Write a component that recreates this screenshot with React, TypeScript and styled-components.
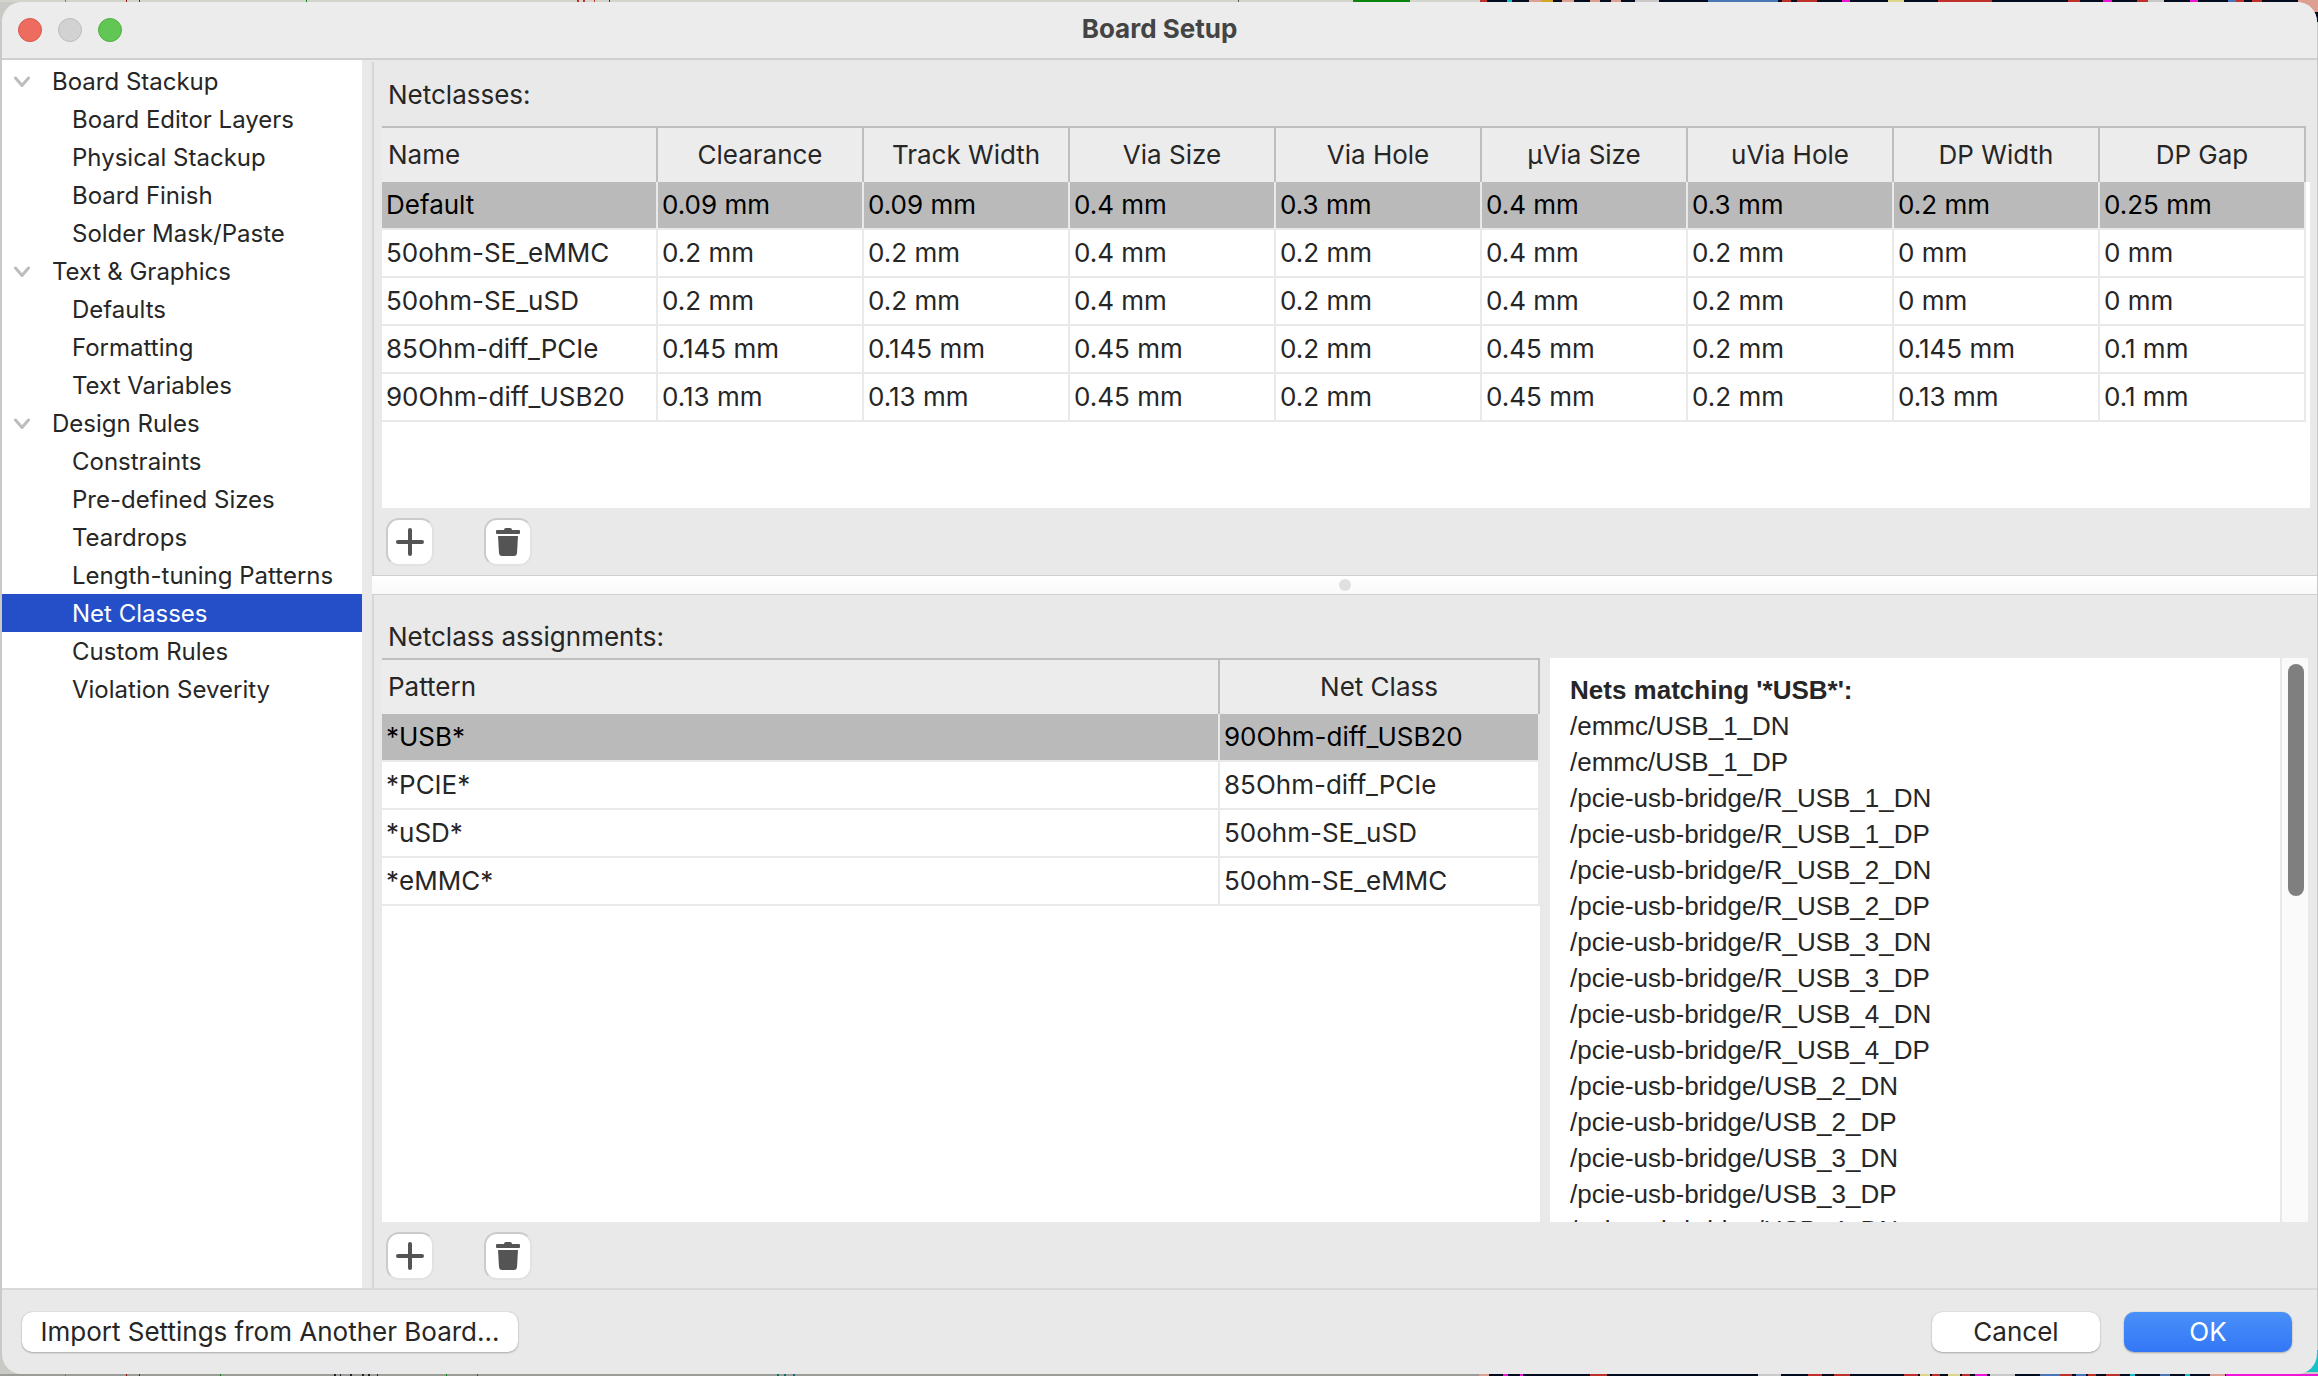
import React, { useState } from "react";
import styled, { createGlobalStyle } from "styled-components";

const Global = createGlobalStyle`
  *, *::before, *::after { box-sizing: border-box; }
  html, body { margin: 0; height: 100%; }
  #root { height: 100%; }
  body {
    font-family: Inter, "Liberation Sans", sans-serif;
    color: #262626;
    overflow: hidden;
  }
  button { font: inherit; color: inherit; }
`;

const Desktop = styled.div`
  position: relative;
  height: 100vh;
  padding: 2px 1px 2px 2px;
  background: #c9c9c5;
`;

const Backdrop = styled.svg`
  position: absolute;
  inset: 0;
  width: 100%;
  height: 100%;
`;

const Window = styled.main`
  position: relative;
  display: flex;
  flex-direction: column;
  height: 100%;
  overflow: hidden;
  border-radius: 20px;
  background: #e9e9e9;
`;

const TitleBar = styled.header`
  display: grid;
  grid-template-columns: 1fr auto 1fr;
  align-items: center;
  flex: none;
  height: 58px;
  padding: 0 16px;
  background: #ececec;
  border-bottom: 2px solid #cfcfcf;
`;

const Lights = styled.div`
  display: flex;
  gap: 16px;
`;

const Light = styled.button<{ $fill: string; $edge: string }>`
  width: 24px;
  height: 24px;
  padding: 0;
  border: 1px solid ${(p) => p.$edge};
  border-radius: 50%;
  background: ${(p) => p.$fill};
`;

const Title = styled.h1`
  margin: 0;
  padding-bottom: 2px;
  font-size: 26px;
  line-height: 32px;
  font-weight: 700;
  color: #444;
`;

const Body = styled.div`
  display: flex;
  flex: 1;
  min-height: 0;
`;

const Sidebar = styled.nav`
  flex: none;
  width: 360px;
  padding-top: 2px;
  background: #fff;
`;

const Tree = styled.ul`
  margin: 0;
  padding: 0;
  list-style: none;
`;

const TreeRow = styled.button<{ $child?: boolean; $selected?: boolean }>`
  display: flex;
  align-items: center;
  width: 100%;
  height: 38px;
  padding: 2px 0 0 ${(p) => (p.$child ? 70 : 12)}px;
  border: 0;
  background: ${(p) => (p.$selected ? "#244fc9" : "transparent")};
  color: ${(p) => (p.$selected ? "#fff" : "#262626")};
  font-size: 24px;
  line-height: 36px;
  white-space: nowrap;
`;

const Chevron = styled.svg`
  width: 16px;
  height: 12px;
  margin-right: 22px;
`;

const Content = styled.div`
  display: flex;
  flex: 1;
  flex-direction: column;
  min-width: 0;
  padding: 2px 0 0 10px;
`;

const Panel = styled.section<{ $grow?: boolean }>`
  display: flex;
  flex-direction: column;
  flex: ${(p) => (p.$grow ? "1" : "none")};
  min-height: 0;
  padding: ${(p) => (p.$grow ? "24px 8px 8px 8px" : "15px 7px 9px 8px")};
  border-left: 2px solid #d6d6d6;
`;

const PanelLabel = styled.h2<{ $gap: number }>`
  margin: 0;
  padding: 0 0 ${(p) => p.$gap}px 6px;
  font-size: 26px;
  line-height: 36px;
  font-weight: 400;
`;

const Splitter = styled.div`
  display: flex;
  align-items: center;
  justify-content: center;
  flex: none;
  height: 20px;
  border-top: 1px solid #d0d0d0;
  border-bottom: 1px solid #d0d0d0;
  background: linear-gradient(#fff, #f9f9f9);
`;

const Grip = styled.span`
  width: 12px;
  height: 12px;
  border-radius: 50%;
  background: #e0e0e0;
`;

const GridBox = styled.div<{ $inset?: number; $height?: number }>`
  height: ${(p) => (p.$height ? p.$height + "px" : "auto")};
  padding-right: ${(p) => p.$inset ?? 0}px;
  background: linear-gradient(#e9e9e9 56px, #fff 56px);
`;

const Grid = styled.table`
  width: 100%;
  table-layout: fixed;
  border-collapse: separate;
  border-spacing: 0;
  font-size: 26px;
  line-height: 30px;
`;

const HeadCell = styled.th`
  height: 56px;
  padding: 0;
  border-top: 2px solid #bebebe;
  border-right: 2px solid #bebebe;
  background: #ececec;
  font-weight: 400;
  text-align: center;
  &:first-child {
    padding-left: 6px;
    text-align: left;
  }
`;

const Cell = styled.td<{ $selected?: boolean }>`
  height: 48px;
  padding: 0 0 0 4px;
  border-right: 2px solid #e9e9e9;
  border-bottom: 2px solid #e9e9e9;
  background: ${(p) => (p.$selected ? "#bababa" : "#fff")};
  color: ${(p) => (p.$selected ? "#000" : "#262626")};
  white-space: nowrap;
`;

const ToolRow = styled.div`
  display: flex;
  gap: 50px;
  padding: 10px 0 0 4px;
`;

const ToolButton = styled.button`
  display: flex;
  align-items: center;
  justify-content: center;
  width: 48px;
  height: 48px;
  padding: 0;
  border: 2px solid #cbcbcb;
  border-right-color: #e2e2e2;
  border-bottom-color: #e2e2e2;
  border-radius: 13px;
  background: #fff;
`;

const Split = styled.div`
  display: grid;
  grid-template-columns: minmax(0, 1fr) 758px;
  gap: 10px;
  flex: 1;
  min-height: 0;
  padding-right: 1px;
`;

const NetsPane = styled.div`
  display: flex;
  min-height: 0;
  background: #fff;
`;

const Nets = styled.div`
  flex: 1;
  min-width: 0;
  overflow: hidden;
  padding: 14px 0 0 20px;
  font-family: "Liberation Sans", Arial, sans-serif;
  font-size: 26px;
  line-height: 36px;
`;

const NetsTitle = styled.h3`
  margin: 0;
  font-size: 26px;
  line-height: 36px;
`;

const NetList = styled.ul`
  margin: 0;
  padding: 0;
  list-style: none;
`;

const Track = styled.div`
  width: 28px;
  padding: 6px 4px 0 6px;
  border-left: 2px solid #e8e8e8;
  background: #fafafa;
`;

const Thumb = styled.div`
  width: 16px;
  height: 232px;
  border-radius: 8px;
  background: #7f7f7f;
`;

const Footer = styled.footer`
  display: flex;
  align-items: center;
  gap: 24px;
  flex: none;
  height: 86px;
  padding: 0 25px 0 20px;
  border-top: 2px solid #d9d9d9;
`;

const PushButton = styled.button<{ $primary?: boolean; $wide?: boolean }>`
  width: ${(p) => (p.$wide ? 496 : 168)}px;
  height: 40px;
  margin-right: ${(p) => (p.$wide ? "auto" : "0")};
  padding: 0;
  border: 0;
  border-radius: 10px;
  background: ${(p) => (p.$primary ? "linear-gradient(#4a90f8, #3377f6)" : "#fff")};
  box-shadow: 0 0 1px rgba(0, 0, 0, 0.3), 0 1px 2px rgba(0, 0, 0, 0.25);
  color: ${(p) => (p.$primary ? "#fff" : "#262626")};
  font-size: 26px;
  line-height: 40px;
`;

const red = "#c0302b";
const dark = "#020c1e";
const pink = "#dd9f91";
const magenta = "#f013d8";
const sand = "#dcd78b";
const blue = "#4a76b8";
const grey = "#c9c9c9";
const teal = "#18c0c8";

type Mark = [x: number, width: number, fill: string];

// Slivers of the schematic and board editors that show above the dialog.
const topMarks: Mark[] = [
  [65, 1, "#777"], [126, 1, "#8b1010"], [139, 1, "#8b1010"], [306, 1, "#0a840a"],
  [577, 2, red], [583, 2, red], [594, 1, red], [609, 1, "#8b1010"], [1238, 1, "#555"],
  [1353, 57, "#0a840a"], [1480, 838, dark], [1480, 7, red], [1507, 5, teal],
  [1529, 12, pink], [1541, 12, "#d5a526"], [1562, 12, pink], [1590, 10, pink],
  [1611, 10, pink], [1635, 24, grey], [1708, 70, blue], [1782, 9, red], [1797, 20, red],
  [1842, 8, magenta], [1888, 16, sand], [1938, 54, red], [2068, 12, red],
  [2103, 9, magenta], [2137, 11, red], [2148, 16, grey], [2190, 8, magenta],
  [2228, 8, blue], [2236, 8, red], [2252, 10, red], [2298, 20, pink],
];

// The same editors below it.
const bottomMarks: Mark[] = [
  [65, 1, "#777"], [126, 1, "#8b1010"], [139, 1, "#8b1010"], [220, 1, "#0a840a"],
  [334, 2, "#222"], [340, 1, "#222"], [350, 2, "#222"], [362, 2, "#222"], [368, 2, "#222"], [377, 1, "#222"],
  [446, 1, "#0a840a"], [477, 1, "#0a840a"], [777, 2, "#0a6e6e"], [784, 2, "#0a6e6e"], [793, 2, "#0a6e6e"],
  [1479, 839, dark], [1479, 10, pink], [1503, 5, magenta], [1520, 3, magenta], [1590, 17, red],
  [1758, 23, grey], [1808, 14, red], [1834, 16, red], [1904, 14, red], [1920, 10, sand],
  [1932, 8, red], [1948, 12, sand], [1962, 8, red], [1975, 12, magenta], [1990, 25, grey],
  [2040, 20, blue], [2060, 12, red], [2076, 10, blue], [2088, 8, red], [2106, 14, red],
  [2130, 5, teal], [2160, 10, blue], [2185, 5, teal], [2210, 15, pink], [2226, 92, magenta],
];

const tree = [
  { name: "Board Stackup", items: ["Board Editor Layers", "Physical Stackup", "Board Finish", "Solder Mask/Paste"] },
  { name: "Text & Graphics", items: ["Defaults", "Formatting", "Text Variables"] },
  {
    name: "Design Rules",
    items: ["Constraints", "Pre-defined Sizes", "Teardrops", "Length-tuning Patterns", "Net Classes", "Custom Rules", "Violation Severity"],
  },
];

const classColumns = ["Name", "Clearance", "Track Width", "Via Size", "Via Hole", "µVia Size", "uVia Hole", "DP Width", "DP Gap"];
const classRows = [
  ["Default", "0.09 mm", "0.09 mm", "0.4 mm", "0.3 mm", "0.4 mm", "0.3 mm", "0.2 mm", "0.25 mm"],
  ["50ohm-SE_eMMC", "0.2 mm", "0.2 mm", "0.4 mm", "0.2 mm", "0.4 mm", "0.2 mm", "0 mm", "0 mm"],
  ["50ohm-SE_uSD", "0.2 mm", "0.2 mm", "0.4 mm", "0.2 mm", "0.4 mm", "0.2 mm", "0 mm", "0 mm"],
  ["85Ohm-diff_PCIe", "0.145 mm", "0.145 mm", "0.45 mm", "0.2 mm", "0.45 mm", "0.2 mm", "0.145 mm", "0.1 mm"],
  ["90Ohm-diff_USB20", "0.13 mm", "0.13 mm", "0.45 mm", "0.2 mm", "0.45 mm", "0.2 mm", "0.13 mm", "0.1 mm"],
];

const patternRows = [
  ["*USB*", "90Ohm-diff_USB20"],
  ["*PCIE*", "85Ohm-diff_PCIe"],
  ["*uSD*", "50ohm-SE_uSD"],
  ["*eMMC*", "50ohm-SE_eMMC"],
];

const nets = [
  "/emmc/USB_1_DN",
  "/emmc/USB_1_DP",
  ...["R_USB_1", "R_USB_2", "R_USB_3", "R_USB_4", "USB_2", "USB_3"].flatMap((n) => [
    `/pcie-usb-bridge/${n}_DN`,
    `/pcie-usb-bridge/${n}_DP`,
  ]),
  "/pcie-usb-bridge/USB_4_DN",
];

function DataGrid({ label, columns, widths, rows }: { label: string; columns: string[]; widths: (number | undefined)[]; rows: string[][] }) {
  const [selected, setSelected] = useState(0);
  return (
    <Grid aria-label={label}>
      <colgroup>
        {columns.map((c, i) => (
          <col key={c} width={widths[i]} />
        ))}
      </colgroup>
      <thead>
        <tr>
          {columns.map((c) => (
            <HeadCell key={c} scope="col">{c}</HeadCell>
          ))}
        </tr>
      </thead>
      <tbody>
        {rows.map((row, r) => (
          <tr key={row[0]} onClick={() => setSelected(r)}>
            {row.map((value, i) => (
              <Cell key={i} $selected={r === selected}>{value}</Cell>
            ))}
          </tr>
        ))}
      </tbody>
    </Grid>
  );
}

function Tools() {
  return (
    <ToolRow>
      <ToolButton aria-label="Add">
        <svg width="28" height="28" viewBox="0 0 28 28" stroke="#545454" strokeWidth="4" strokeLinecap="round">
          <path d="M14 2v24M2 14h24" />
        </svg>
      </ToolButton>
      <ToolButton aria-label="Delete">
        <svg width="24" height="28" viewBox="0 0 24 28" fill="#545454">
          <path d="M1 2h7q0-2 2-2h4q2 0 2 2h7q1 0 1 1v2q0 1-1 1H1q-1 0-1-1V3q0-1 1-1z" />
          <path d="M2 8h20l-1 17q-.3 3-3 3H6q-2.700 0-3-3z" />
        </svg>
      </ToolButton>
    </ToolRow>
  );
}

export default function App() {
  const [page, setPage] = useState("Net Classes");
  return (
    <Desktop>
      <Global />
      <Backdrop viewBox="0 0 2318 1376" preserveAspectRatio="none" aria-hidden="true">
        <rect x="0" y="0" width="2318" height="2" fill="#d3d4cc" />
        <rect x="0" y="1374" width="2318" height="2" fill="#9c9c99" />
        {topMarks.map(([x, width, fill], i) => (
          <rect key={i} x={x} y="0" width={width} height="2" fill={fill} />
        ))}
        {bottomMarks.map(([x, width, fill], i) => (
          <rect key={i} x={x} y="1374" width={width} height="2" fill={fill} />
        ))}
        <rect x="2298" y="0" width="20" height="12" fill={pink} />
        <rect x="2298" y="12" width="20" height="10" fill={dark} />
        <rect x="2298" y="1350" width="20" height="22" fill={teal} />
      </Backdrop>
      <Window>
        <TitleBar>
          <Lights>
            <Light aria-label="Close" $fill="#ed6b5f" $edge="#d9574c" />
            <Light aria-label="Minimize" $fill="#d2d2d2" $edge="#bcbcbc" />
            <Light aria-label="Zoom" $fill="#62c655" $edge="#51ae40" />
          </Lights>
          <Title>Board Setup</Title>
        </TitleBar>
        <Body>
          <Sidebar aria-label="Settings pages">
            <Tree>
              {tree.map((group) => (
                <li key={group.name}>
                  <TreeRow>
                    <Chevron viewBox="0 0 16 12" fill="none" stroke="#bdbdbd" strokeWidth="3" strokeLinecap="round" strokeLinejoin="round">
                      <path d="M1.500 2L8 9.500 14.500 2" />
                    </Chevron>
                    {group.name}
                  </TreeRow>
                  <Tree>
                    {group.items.map((item) => (
                      <li key={item}>
                        <TreeRow $child $selected={item === page} onClick={() => setPage(item)}>{item}</TreeRow>
                      </li>
                    ))}
                  </Tree>
                </li>
              ))}
            </Tree>
          </Sidebar>
          <Content>
            <Panel>
              <PanelLabel $gap={13}>Netclasses:</PanelLabel>
              <GridBox $inset={4} $height={382}>
                <DataGrid label="Netclasses" columns={classColumns} widths={[276]} rows={classRows} />
              </GridBox>
              <Tools />
            </Panel>
            <Splitter>
              <Grip />
            </Splitter>
            <Panel $grow>
              <PanelLabel $gap={3}>Netclass assignments:</PanelLabel>
              <Split>
                <GridBox>
                  <DataGrid label="Netclass assignments" columns={["Pattern", "Net Class"]} widths={[undefined, 320]} rows={patternRows} />
                </GridBox>
                <NetsPane>
                  <Nets>
                    <NetsTitle>Nets matching '*USB*':</NetsTitle>
                    <NetList>
                      {nets.map((n) => (
                        <li key={n}>{n}</li>
                      ))}
                    </NetList>
                  </Nets>
                  <Track>
                    <Thumb />
                  </Track>
                </NetsPane>
              </Split>
              <Tools />
            </Panel>
          </Content>
        </Body>
        <Footer>
          <PushButton $wide>Import Settings from Another Board...</PushButton>
          <PushButton>Cancel</PushButton>
          <PushButton $primary>OK</PushButton>
        </Footer>
      </Window>
    </Desktop>
  );
}
